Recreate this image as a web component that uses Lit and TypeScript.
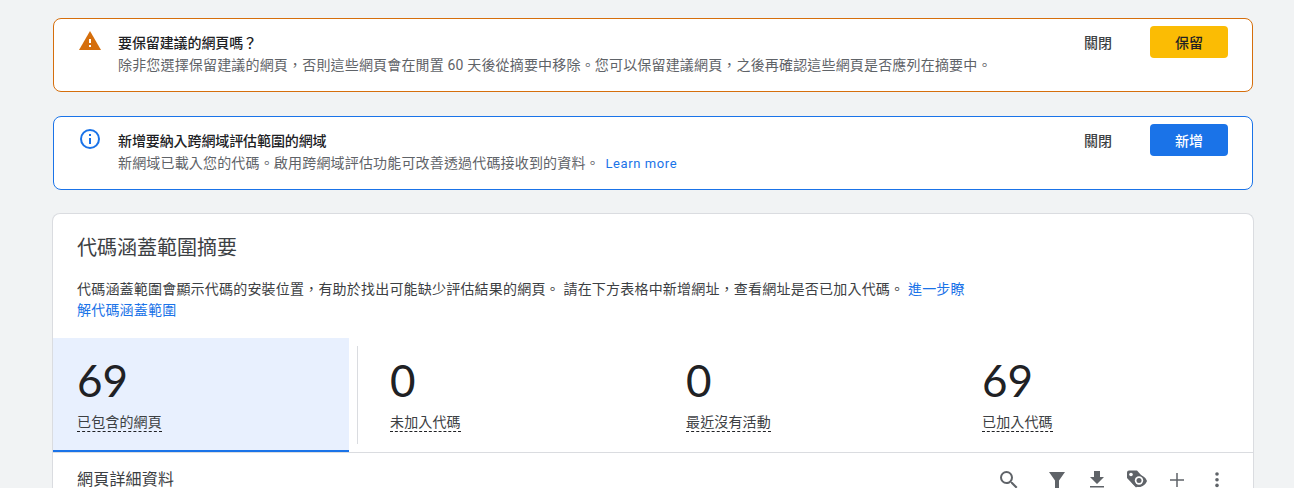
import { LitElement, html, css } from "lit";
import { customElement } from "lit/decorators.js";

const tabs = [
  { n: "69", l: "已包含的網頁", active: true },
  { n: "0", l: "未加入代碼" },
  { n: "0", l: "最近沒有活動" },
  { n: "69", l: "已加入代碼" },
];

@customElement("app-root")
export class AppRoot extends LitElement {
  static styles = css`
    :host {
      display: block;
      height: 488px;
      overflow: hidden;
      background: #f1f3f4;
      font-family: Roboto, "Noto Sans CJK TC", sans-serif;
      color: #202124;
    }
    .page {
      padding: 18px 41px 0 53px;
      display: flex;
      flex-direction: column;
    }
    .banner {
      box-sizing: border-box;
      height: 74px;
      background: #fff;
      border: 1px solid;
      border-radius: 8px;
      display: flex;
      padding: 0 24px 0 24px;
      margin-bottom: 24px;
    }
    .warn { border-color: #d56e0c; }
    .info { border-color: #1a73e8; }
    .icon { width: 24px; height: 24px; margin-top: 10px; flex: none; }
    .body { flex: 1; margin-left: 16px; padding-top: 14px; }
    .title {
      font-size: 14px;
      line-height: 20px;
      font-weight: 500;
      letter-spacing: -0.1px;
      color: #202124;
    }
    .desc {
      margin-top: 2px;
      font-size: 14px;
      line-height: 20px;
      letter-spacing: 0.17px;
      color: #5f6368;
    }
    a { color: #1a73e8; text-decoration: none; }
    .desc a { margin-left: 2px; font-size: 13px; letter-spacing: 0.6px; }
    .close {
      font-size: 14px;
      font-weight: 500;
      color: #3c4043;
      margin-top: 14px;
      line-height: 20px;
      margin-right: 38px;
    }
    .btn {
      margin-top: 7px;
      width: 78px;
      height: 32px;
      border-radius: 4px;
      font-size: 14px;
      font-weight: 500;
      display: flex;
      align-items: center;
      justify-content: center;
    }
    .yellow { background: #fbbc04; color: #202124; }
    .blue { background: #1a73e8; color: #fff; }
    .card {
      margin: -1px -1px 0 -1px;
      background: #fff;
      border: 1px solid #dadce0;
      border-bottom: none;
      border-radius: 8px 8px 0 0;
      height: 300px;
    }
    h2 {
      margin: 0;
      padding: 21px 24px 0;
      font-size: 20px;
      line-height: 26px;
      font-weight: 400;
      color: #3c4043;
    }
    .intro {
      margin: 18px 0 0 24px;
      width: 892px;
      font-size: 14px;
      line-height: 21px;
      letter-spacing: 0.2px;
      color: #3c4043;
    }
    .tabs {
      margin-top: 17px;
      display: flex;
      height: 115px;
      border-bottom: 1px solid #dadce0;
      box-sizing: border-box;
      position: relative;
    }
    .tab {
      width: 296px;
      flex: none;
      padding: 17px 24px 0;
      box-sizing: border-box;
    }
    .tab.active {
      background: #e8f0fe;
      border-bottom: 2px solid #1a73e8;
      height: 114px;
      margin-right: 17px;
    }
    .sep {
      position: absolute;
      left: 304px;
      top: 8px;
      bottom: 8px;
      width: 1px;
      background: #dadce0;
    }
    .num {
      font-family: Lato, sans-serif;
      font-size: 44px;
      line-height: 50px;
      font-weight: 400;
      color: #202124;
    }
    .lab {
      display: inline-block;
      font-size: 14px;
      line-height: 18px;
      margin-top: 8px;
      color: #3c4043;
      letter-spacing: 0.15px;
      border-bottom: 1px dashed #202124;
    }
    .foot {
      display: flex;
      height: 36px;
      padding: 0 0 0 24px;
    }
    .foot .t { font-size: 16px; letter-spacing: 0.2px; color: #3c4043; line-height: 54px; flex: 1; }
    .tools { display: flex; padding-right: 24px; padding-top: 15px; }
    .tools svg { width: 24px; height: 24px; fill: #5f6368; display: block; margin-right: 16px; }
    .tools svg.wide { margin-right: 24px; }
    .tools svg:last-child { margin-right: 0; }
  `;

  render() {
    return html`<div class="page">
      <div class="banner warn">
        <svg class="icon" viewBox="0 0 24 24"><path fill="#d56e0c" d="M1 21L12 2l11 19H1z"/><path fill="#fff" d="M11 10h2v4h-2zM11 16h2v2h-2z"/></svg>
        <div class="body">
          <div class="title">要保留建議的網頁嗎？</div>
          <div class="desc">除非您選擇保留建議的網頁，否則這些網頁會在閒置 60 天後從摘要中移除。您可以保留建議網頁，之後再確認這些網頁是否應列在摘要中。</div>
        </div>
        <div class="close">關閉</div>
        <div class="btn yellow">保留</div>
      </div>
      <div class="banner info">
        <svg class="icon" viewBox="0 0 24 24"><path fill="#1a73e8" d="M11 7h2v2h-2zM11 11h2v6h-2z"/><path fill="#1a73e8" d="M12 2a10 10 0 100 20 10 10 0 000-20zm0 18a8 8 0 110-16 8 8 0 010 16z"/></svg>
        <div class="body">
          <div class="title">新增要納入跨網域評估範圍的網域</div>
          <div class="desc">新網域已載入您的代碼。啟用跨網域評估功能可改善透過代碼接收到的資料。 <a>Learn more</a></div>
        </div>
        <div class="close">關閉</div>
        <div class="btn blue">新增</div>
      </div>
      <div class="card">
        <h2>代碼涵蓋範圍摘要</h2>
        <div class="intro">代碼涵蓋範圍會顯示代碼的安裝位置，有助於找出可能缺少評估結果的網頁。 請在下方表格中新增網址，查看網址是否已加入代碼。 <a>進一步瞭解代碼涵蓋範圍</a></div>
        <div class="tabs">
          ${tabs.map(
            (t) => html`<div class="tab ${t.active ? "active" : ""}">
              <div class="num">${t.n}</div>
              <div class="lab">${t.l}</div>
            </div>`
          )}
          <div class="sep"></div>
        </div>
        <div class="foot">
          <div class="t">網頁詳細資料</div>
          <div class="tools">
            <svg class="wide" viewBox="0 0 24 24"><path d="M15.5 14h-.79l-.28-.27A6.47 6.47 0 0016 9.5 6.5 6.5 0 109.5 16c1.61 0 3.09-.59 4.23-1.57l.27.28v.79l5 4.99L20.49 19l-4.99-5zm-6 0C7.01 14 5 11.99 5 9.5S7.01 5 9.5 5 14 7.01 14 9.5 11.99 14 9.5 14z"/></svg>
            <svg viewBox="0 0 24 24"><path d="M4 4h16l-6 8.500V21h-4v-8.500z"/></svg>
            <svg viewBox="0 0 24 24"><path d="M19 9h-4V3H9v6H5l7 7 7-7zM5 18v1.500h14V18H5z"/></svg>
            <svg viewBox="0 0 24 24"><path d="M2 4v6l9 9.500 10-7-9-10H4a2 2 0 00-2 2z"/><circle cx="6" cy="6.500" r="1.800" fill="#fff"/><path d="M6 13c2-4 4.500-6 8-6s6.500 2.500 8 6c-1.500 3.500-4.500 6-8 6s-6-2.500-8-6z"/><circle cx="14" cy="12.500" r="4.200" fill="#fff"/><circle cx="14" cy="12.500" r="2.500"/></svg>
            <svg viewBox="0 0 24 24"><path d="M19 12.750h-6.250V19h-1.500v-6.250H5v-1.500h6.250V5h1.500v6.250H19z"/></svg>
            <svg viewBox="0 0 24 24"><circle cx="12" cy="6" r="1.800"/><circle cx="12" cy="11.800" r="1.800"/><circle cx="12" cy="17.400" r="1.800"/></svg>
          </div>
        </div>
      </div>
    </div>`;
  }
}
